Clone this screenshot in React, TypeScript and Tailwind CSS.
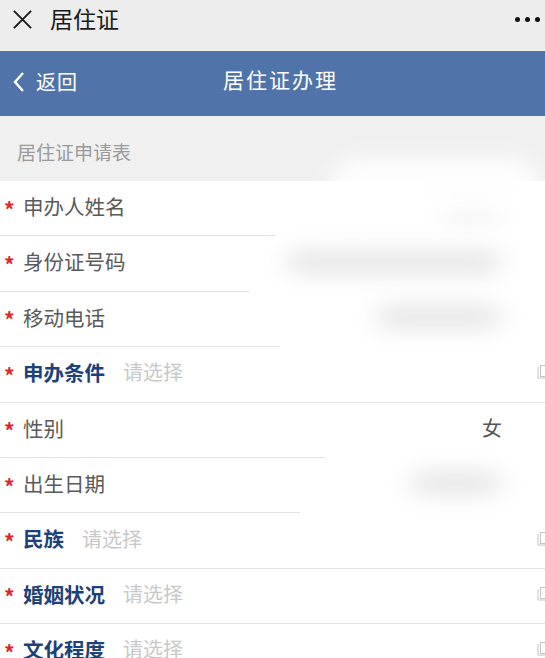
import React from "react";

type Row = {
  label: string;
  blue?: boolean;
  placeholder?: boolean;
  value?: string;
  blur?: number;
  sep: string;
};

const rows: Row[] = [
  { label: "申办人姓名", blur: 60, sep: "w-[275px]" },
  { label: "身份证号码", blur: 215, sep: "w-[250px]" },
  { label: "移动电话", blur: 125, sep: "w-[280px]" },
  { label: "申办条件", blue: true, placeholder: true, sep: "w-full" },
  { label: "性别", value: "女", sep: "w-[325px]" },
  { label: "出生日期", blur: 90, sep: "w-[300px]" },
  { label: "民族", blue: true, placeholder: true, sep: "w-full" },
  { label: "婚姻状况", blue: true, placeholder: true, sep: "w-full" },
  { label: "文化程度", blue: true, placeholder: true, sep: "w-full" },
];

function CopyIcon() {
  return (
    <svg width="14" height="16" viewBox="0 0 14 16" className="shrink-0">
      <path d="M1 3 V14 H10" fill="none" stroke="#c4c4c4" strokeWidth="1" />
      <rect x="3.5" y="1.5" width="9" height="11" fill="none" stroke="#c4c4c4" strokeWidth="1" />
    </svg>
  );
}

export default function App() {
  return (
    <div
      className="relative w-[545px] h-[658px] overflow-hidden bg-white"
      style={{ fontFamily: '"Noto Sans CJK SC", "Noto Sans", sans-serif' }}
    >
      {/* top bar */}
      <div className="h-[51px] bg-[#ededed] flex items-center pl-[12px] pr-[5px] pb-[13px]">
        <svg width="21" height="21" viewBox="0 0 22 22" className="mr-[17px]">
          <path d="M2 2 L20 20 M20 2 L2 20" stroke="#1a1a1a" strokeWidth="2" />
        </svg>
        <span className="text-[23px] text-[#1a1a1a] leading-none -mt-[2px]">居住证</span>
        <div className="ml-auto flex gap-[5px]">
          <span className="w-[5px] h-[5px] rounded-full bg-[#111]" />
          <span className="w-[5px] h-[5px] rounded-full bg-[#111]" />
          <span className="w-[5px] h-[5px] rounded-full bg-[#111]" />
        </div>
      </div>

      {/* blue header */}
      <div className="h-[65px] bg-[#5074aa] flex items-center relative pb-[4px]">
        <div className="flex items-center pl-[12px] text-white">
          <svg width="14" height="22" viewBox="0 0 14 22" className="mr-[10px]">
            <path d="M11 2 L3 11 L11 20" fill="none" stroke="white" strokeWidth="2.4" />
          </svg>
          <span className="text-[20px] tracking-[1px] leading-none">返回</span>
        </div>
        <div className="absolute left-0 right-0 text-center text-white text-[21px] tracking-[2px] leading-none pointer-events-none pl-[16px] -mt-[4px]">
          居住证办理
        </div>
      </div>

      {/* section header */}
      <div className="h-[65px] bg-[#f0f0f0] flex items-center pl-[17px] text-[19px] text-[#9a9a9a] pt-[8px]">
        居住证申请表
      </div>

      {/* rows */}
      <div className="flex flex-col">
        {rows.map((r, i) => (
          <div key={i} className="h-[55.4px] flex flex-col">
            <div className="flex-1 flex items-center pl-[4px] pr-0 pb-[4px]">
              <span className="text-[#e0242a] text-[21px] font-bold w-[19px] leading-none mt-[6px]">*</span>
              <span
                className={
                  "text-[20.5px] leading-none " +
                  (r.blue ? "text-[#1d4179] font-bold" : "text-[#5a5a5a]")
                }
              >
                {r.label}
              </span>
              {r.placeholder && (
                <span className="ml-[18px] text-[20px] text-[#c8c8c8] leading-none">请选择</span>
              )}
              <div className="ml-auto flex items-center">
                {r.value && (
                  <span className="text-[20px] text-[#555] mr-[43px] leading-none">{r.value}</span>
                )}
                {r.blur && (
                  <span
                    className="h-[18px] rounded-full bg-[#dedede] blur-[12px] mr-[44px]"
                    style={{ width: r.blur }}
                  />
                )}
                {r.placeholder && (
                  <span className="-mr-[6px]">
                    <CopyIcon />
                  </span>
                )}
              </div>
            </div>
            <div className={"h-px bg-[#e3e3e3] " + r.sep} />
          </div>
        ))}
      </div>

      {/* privacy blur patch over header edge */}
      <div className="absolute left-[330px] top-[158px] w-[210px] h-[60px] rounded-full bg-white blur-[10px] opacity-90 pointer-events-none" />
    </div>
  );
}
